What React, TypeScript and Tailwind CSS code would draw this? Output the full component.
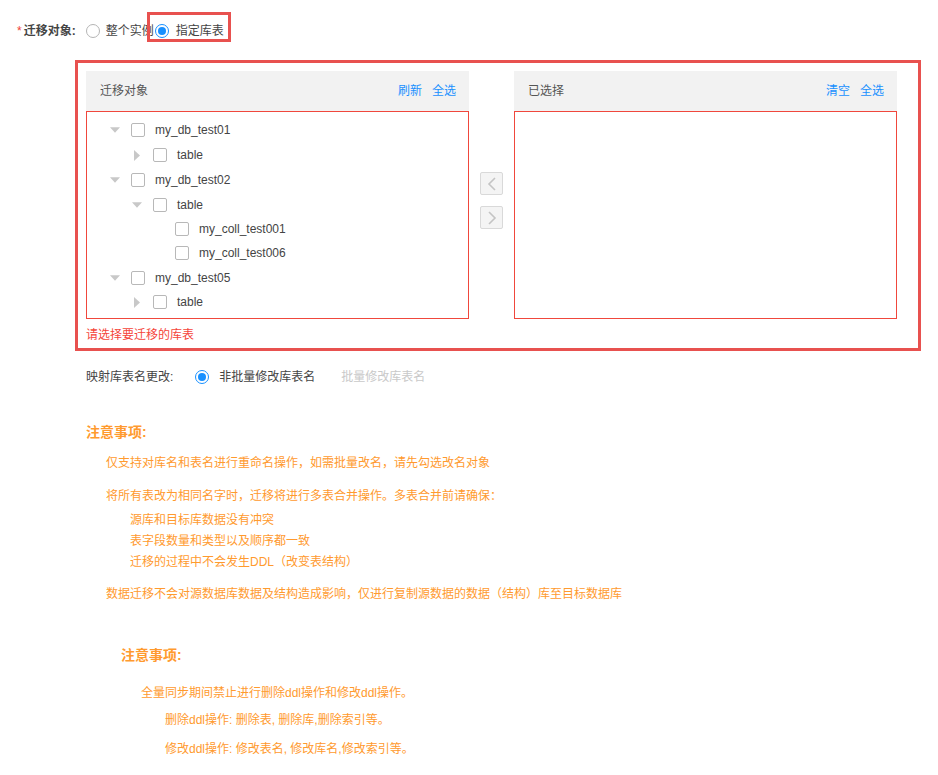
import React from "react";

const FONT = { fontFamily: '"Liberation Sans", Arial, "Noto Sans CJK SC", sans-serif' };

function Radio({ checked }: { checked?: boolean }) {
  return checked ? (
    <span className="flex h-[14px] w-[14px] shrink-0 items-center justify-center rounded-full border border-[#1890ff] bg-white">
      <span className="block h-[8px] w-[8px] rounded-full bg-[#1890ff]" />
    </span>
  ) : (
    <span className="block h-[14px] w-[14px] shrink-0 rounded-full border border-[#b5b5b5] bg-white" />
  );
}

function Checkbox() {
  return <span className="block h-[14px] w-[14px] shrink-0 rounded-[2px] border border-[#b8b8b8] bg-white" />;
}

type Node = { label: string; level: number; arrow: "down" | "right" | "none"; gap: string };

const nodes: Node[] = [
  { label: "my_db_test01", level: 0, arrow: "down", gap: "mt-0" },
  { label: "table", level: 1, arrow: "right", gap: "mt-[1px]" },
  { label: "my_db_test02", level: 0, arrow: "down", gap: "mt-[1px]" },
  { label: "table", level: 1, arrow: "down", gap: "mt-[1px]" },
  { label: "my_coll_test001", level: 2, arrow: "none", gap: "mt-0" },
  { label: "my_coll_test006", level: 2, arrow: "none", gap: "mt-0" },
  { label: "my_db_test05", level: 0, arrow: "down", gap: "mt-[1px]" },
  { label: "table", level: 1, arrow: "right", gap: "mt-0" },
];

const indent = ["pl-[23px]", "pl-[45px]", "pl-[67px]"];

function Arrow({ dir }: { dir: "down" | "right" | "none" }) {
  return (
    <span className="flex h-[12px] w-[10px] shrink-0 items-center justify-center">
      {dir === "down" && (
        <svg width="11" height="6" viewBox="0 0 11 6">
          <polygon points="0,0 11,0 5.5,6" fill="#c8c8c8" />
        </svg>
      )}
      {dir === "right" && (
        <svg width="6" height="11" viewBox="0 0 6 11">
          <polygon points="0,0 6,5.5 0,11" fill="#c8c8c8" />
        </svg>
      )}
    </span>
  );
}

function PanelHeader({ title, links }: { title: string; links: string[] }) {
  return (
    <div className="flex h-[40px] items-center justify-between bg-[#f2f2f2] pl-[14px] pr-[13px] text-[12px]">
      <span className="text-[#555]">{title}</span>
      <div className="flex gap-[10px] text-[#1890ff]">
        {links.map((l) => (
          <span key={l}>{l}</span>
        ))}
      </div>
    </div>
  );
}

function ArrowBtn({ left }: { left?: boolean }) {
  return (
    <div className="flex h-[23px] w-[23px] items-center justify-center rounded-[2px] border border-[#d9d9d9] bg-[#f4f4f4]">
      <svg width="10" height="16" viewBox="0 0 10 16">
        <polyline
          points={left ? "8,2 2,8 8,14" : "2,2 8,8 2,14"}
          fill="none"
          stroke="#c4c4c4"
          strokeWidth="1.6"
        />
      </svg>
    </div>
  );
}

export default function App() {
  const orange = "text-[#ff9a2e]";
  return (
    <div className="h-[775px] w-[938px] overflow-hidden bg-white text-[12px] leading-[16px] text-[#333]" style={FONT}>
      {/* row 1 */}
      <div className="flex h-[16px] items-center pl-[17px] mt-[23px]">
        <span className="mr-[2px] text-[#f04134]">*</span>
        <span className="font-semibold text-[#444]">迁移对象:</span>
        <div className="ml-[10px] flex items-center">
          <Radio />
          <span className="ml-[6px] text-[#444]">整个实例</span>
        </div>
        <div className="relative ml-[1px] flex items-center">
          <Radio checked />
          <span className="ml-[7px] text-[#444]">指定库表</span>
          <span className="pointer-events-none absolute left-[-8px] top-[-11px] h-[30px] w-[84px] border-[3px] border-[#e8514f]" />
        </div>
      </div>

      {/* big box */}
      <div className="ml-[75px] mt-[21px] w-[846px] border-[3px] border-[#e8514f] pl-[8px] pt-[8px] pb-[5px]">
        <div className="flex">
          <div className="w-[383px]">
            <PanelHeader title="迁移对象" links={["刷新", "全选"]} />
            <div className="h-[208px] border border-[#f0473c] pt-[6px]">
              {nodes.map((n, i) => (
                <div key={i} className={`flex h-[24px] items-center ${n.gap} ${indent[n.level]}`}>
                  <Arrow dir={n.arrow} />
                  <span className="ml-[11px] block">
                    <Checkbox />
                  </span>
                  <span className="ml-[10px] text-[#444]">{n.label}</span>
                </div>
              ))}
            </div>
          </div>
          <div className="w-[45px] pl-[11px] pt-[101px]">
            <ArrowBtn left />
            <div className="mt-[11px]">
              <ArrowBtn />
            </div>
          </div>
          <div className="w-[383px]">
            <PanelHeader title="已选择" links={["清空", "全选"]} />
            <div className="h-[208px] border border-[#f0473c]" />
          </div>
        </div>
        <div className="mt-[8px] text-[#f5453a]">请选择要迁移的库表</div>
      </div>

      {/* mapping row */}
      <div className="ml-[86px] mt-[18px] flex h-[16px] items-center">
        <span className="text-[#444]">映射库表名更改:</span>
        <span className="ml-[22px] block">
          <Radio checked />
        </span>
        <span className="ml-[10px] text-[#444]">非批量修改库表名</span>
        <span className="ml-[26px] text-[#c9c9c9]">批量修改库表名</span>
      </div>

      {/* notes 1 */}
      <div className={`ml-[86px] mt-[37px] text-[14px] font-bold leading-[20px] ${orange}`}>注意事项:</div>
      <div className={`ml-[106px] mt-[13px] ${orange}`}>仅支持对库名和表名进行重命名操作，如需批量改名，请先勾选改名对象</div>
      <div className={`ml-[106px] mt-[17px] ${orange}`}>将所有表改为相同名字时，迁移将进行多表合并操作。多表合并前请确保：</div>
      <div className={`ml-[130px] mt-[8px] ${orange}`}>源库和目标库数据没有冲突</div>
      <div className={`ml-[130px] mt-[5px] ${orange}`}>表字段数量和类型以及顺序都一致</div>
      <div className={`ml-[130px] mt-[5px] ${orange}`}>迁移的过程中不会发生DDL（改变表结构）</div>
      <div className={`ml-[106px] mt-[16px] ${orange}`}>数据迁移不会对源数据库数据及结构造成影响，仅进行复制源数据的数据（结构）库至目标数据库</div>

      {/* notes 2 */}
      <div className={`ml-[121px] mt-[43px] text-[14px] font-bold leading-[20px] ${orange}`}>注意事项:</div>
      <div className={`ml-[141px] mt-[20px] ${orange}`}>全量同步期间禁止进行删除ddl操作和修改ddl操作。</div>
      <div className={`ml-[165px] mt-[11px] ${orange}`}>删除ddl操作: 删除表, 删除库,删除索引等。</div>
      <div className={`ml-[165px] mt-[13px] ${orange}`}>修改ddl操作: 修改表名, 修改库名,修改索引等。</div>
    </div>
  );
}
